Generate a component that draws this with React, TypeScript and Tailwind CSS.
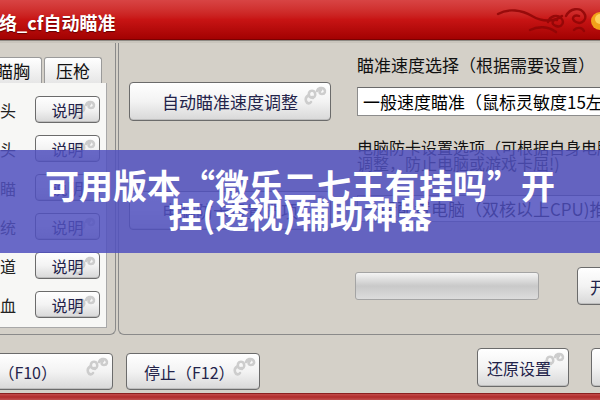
import React from 'react';

// little cloud curl printed in the corner of every skinned button
function Curl({ className = '' }: { className?: string }) {
  return (
    <svg className={className} width="28" height="22" viewBox="0 0 28 22" fill="none" stroke="#cdcdcd" strokeWidth="2.6" strokeLinecap="round">
      <path d="M12 14c-3 0-5-2-4-5s5-3 6 0-1 5-3 4" />
      <path d="M16 7c1-3 5-4 7-2s1 5-2 5-3-3-1-4" />
      <path d="M8 11c-2 1-4 3-3 6s4 3 5 1" />
    </svg>
  );
}

function SkinButton({ children, className = '', textClass = '' }: { children: React.ReactNode; className?: string; textClass?: string }) {
  return (
    <div
      className={`relative flex shrink-0 items-center rounded-[4px] border border-[#6b6b6b] bg-gradient-to-b from-white via-[#f3f3f3] to-[#d8d8d8] text-[#23234a] shadow-[inset_0_-1px_0_#bdbdbd] ${className}`}
    >
      <Curl className="absolute right-[1px] top-[1px]" />
      <span className={`relative whitespace-nowrap ${textClass}`}>{children}</span>
    </div>
  );
}

function TitleOrnament() {
  return (
    <svg width="110" height="40" viewBox="0 0 110 40" fill="none" className="shrink-0">
      <g stroke="#8e0606" strokeWidth="2.4" strokeLinecap="round" opacity="0.85">
        <path d="M8 14c10-6 24-4 34 2s22 6 30 0" />
        <path d="M58 22c2-6 9-8 13-4s1 10-5 8-3-7 1-6" />
        <path d="M76 16c4-8 14-9 18-3s-2 12-8 9-2-8 3-6" />
        <path d="M40 30c8-4 18-4 26 2" />
        <path d="M84 30c3-3 8-3 10 1" />
      </g>
      <circle cx="110" cy="21" r="9" fill="#f2a21a" />
      <circle cx="110" cy="19" r="5" fill="#ffd15a" />
    </svg>
  );
}

const rows = ['自动爆头', '快速爆头', '自动瞄', '瞄准系统', '穿墙通道', '无限回血'];

export default function App() {
  return (
    <div className="relative h-[400px] w-[600px] overflow-hidden bg-[#d4d0c8] font-['Noto_Sans_CJK_SC','Noto_Sans',sans-serif]">
      {/* title bar */}
      <div className="flex h-[40px] items-center overflow-hidden border-b border-[#7c0000] bg-gradient-to-b from-[#d84444] via-[#c81414] to-[#a30202]">
        <span className="-ml-[19px] pt-[4px] text-[18px] leading-none font-bold whitespace-nowrap text-white [text-shadow:0_1px_1px_#600]">
          网络_cf自动瞄准
        </span>
        <div className="ml-auto">
          <TitleOrnament />
        </div>
      </div>
      <div className="h-[3px] border-t border-[#8d8a84] bg-[#c9c5bd]" />

      {/* group boxes */}
      <div className="flex h-[292px]">
        <div className="w-[116px] shrink-0 overflow-hidden rounded-br-[6px] border-r border-b border-[#8a8a8a] pt-[14px]">
          <div className="-ml-[16px] flex h-[26px] gap-[2px] text-[17px] leading-none text-[#111]">
            <div className="flex w-[58px] items-center justify-center rounded-t-[3px] border border-b-0 border-[#9a9a9a] bg-gradient-to-b from-white to-[#e6e6e6]">
              瞄胸
            </div>
            <div className="flex w-[58px] items-center justify-center rounded-t-[3px] border border-b-0 border-[#9a9a9a] bg-gradient-to-b from-white to-[#e6e6e6]">
              压枪
            </div>
          </div>
          <div className="flex h-[245px] w-[107px] flex-col gap-[12px] border-r border-b border-[#a8a8a8] bg-[#f7f7f5] pt-[13px]">
            {rows.map((r) => (
              <div key={r} className="flex h-[27px] items-center">
                <div className="flex w-[16px] justify-end overflow-visible">
                  <span className="text-[16px] leading-none whitespace-nowrap text-[#222]">{r}</span>
                </div>
                <SkinButton className="ml-[19px] h-[27px] w-[65px] justify-center" textClass="text-[16px] leading-none">
                  说明
                </SkinButton>
              </div>
            ))}
          </div>
        </div>

        <div className="ml-[2px] flex-1 overflow-hidden rounded-bl-[6px] border-b border-l border-[#8a8a8a] pl-[10px]">
          <div className="flex items-start">
            <SkinButton className="mt-[39px] h-[39px] w-[202px] justify-center" textClass="text-[17px] leading-none">
              自动瞄准速度调整
            </SkinButton>
            <div className="ml-[26px] shrink-0">
              <div className="mt-[12px] text-[17px] leading-[20px] whitespace-nowrap text-[#111]">瞄准速度选择（根据需要设置）</div>
              <div className="mt-[12px] flex h-[29px] w-[300px] items-center border border-[#8c8c8c] border-t-[#6a6a6a] bg-white pl-[5px] text-[17px] leading-none whitespace-nowrap text-[#000]">
                一般速度瞄准（鼠标灵敏度15左右）
              </div>
            </div>
          </div>

          <div className="flex items-start">
            <SkinButton className="mt-[70px] h-[39px] w-[202px] justify-center" textClass="text-[17px] leading-none">
              电脑防卡设置选项
            </SkinButton>
            <div className="ml-[26px] shrink-0">
              <div className="mt-[18px] text-[16px] leading-[16px] whitespace-nowrap text-[#111]">
                电脑防卡设置选项（可根据自身电脑
                <br />
                调整，防止电脑或游戏卡屈!)
              </div>
              <div className="mt-[24px] flex h-[27px] w-[300px] items-center border border-[#8c8c8c] border-t-[#6a6a6a] bg-white pl-[5px] text-[17px] leading-none whitespace-nowrap text-[#000]">
                一般配置电脑（双核以上CPU)推荐
              </div>
            </div>
          </div>

          <div className="mt-[37px] ml-[226px] flex items-center">
            <div className="h-[28px] w-[184px] shrink-0 rounded-[3px] border border-[#a4a4a4] bg-gradient-to-b from-[#f4f4f4] via-[#c9c9c9] to-[#dcdcdc]" />
            <SkinButton className="ml-[38px] h-[38px] w-[80px] justify-start pl-[12px]" textClass="text-[17px] leading-none">
              开始
            </SkinButton>
          </div>
        </div>
      </div>

      {/* bottom buttons */}
      <div className="flex h-[58px] items-start">
        <SkinButton className="-ml-[60px] mt-[18px] h-[37px] w-[173px] justify-end pr-[55px]" textClass="text-[16px] leading-none">
          开始（F10）
        </SkinButton>
        <SkinButton className="ml-[13px] mt-[18px] h-[37px] w-[134px] justify-start pl-[17px]" textClass="text-[16px] leading-none">
          停止（F12）
        </SkinButton>
        <SkinButton className="ml-[217px] mt-[13px] h-[39px] w-[92px] justify-start pl-[9px]" textClass="text-[16px] leading-none">
          还原设置
        </SkinButton>
        <SkinButton className="ml-[22px] mt-[13px] h-[39px] w-[90px] justify-start pl-[9px]" textClass="text-[16px] leading-none">
          退出
        </SkinButton>
      </div>

      {/* red bottom frame */}
      <div className="h-[7px] border-t border-[#8a2020] bg-gradient-to-b from-[#c24a4a] via-[#b02a2a] to-[#c05050]" />

      {/* caption band across the window */}
      <div className="absolute top-[150px] left-0 flex h-[103px] w-full flex-col items-center justify-center bg-[rgba(80,80,190,0.85)] pb-[5px] text-[34px] leading-[29px] font-bold text-white">
        <div className="whitespace-nowrap">可用版本“微乐二七王有挂吗”开</div>
        <div className="whitespace-nowrap">挂(透视)辅助神器</div>
      </div>
    </div>
  );
}
